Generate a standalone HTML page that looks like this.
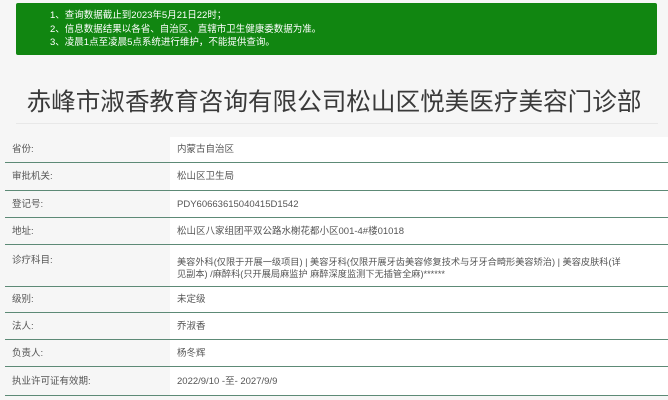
<!DOCTYPE html>
<html><head><meta charset="utf-8"><style>
*{margin:0;padding:0;box-sizing:border-box}
body{width:668px;height:400px;overflow:hidden;background:#f6f6f6;font-family:"Liberation Sans","Noto Sans CJK SC",sans-serif;position:relative}
.green{position:absolute;left:16px;top:3px;width:641px;height:52px;background:#118611;border-radius:2px;color:#fff;font-size:9.5px;line-height:13.5px;padding:6px 0 0 34px}
h1{position:absolute;left:0;top:83px;width:668px;text-align:center;font-weight:normal;font-size:24.6px;color:#3a3a3a;line-height:34px;white-space:nowrap;font-family:"Noto Sans CJK SC",sans-serif}
.hr{position:absolute;left:16px;top:123px;width:642px;height:1px;background:#e8e8e8}
.row{position:absolute;left:5px;width:663px;border-bottom:1.5px solid #5d8a76;font-size:9.5px;color:#555}
.row .l{position:absolute;left:7px}
.row .v{position:absolute;left:165px;top:0;bottom:0;right:0;background:#fff;padding-left:7px;white-space:nowrap;overflow:hidden}
</style></head><body>
<div class="green">1、查询数据截止到2023年5月21日22时；<br>2、信息数据结果以各省、自治区、直辖市卫生健康委数据为准。<br>3、凌晨1点至凌晨5点系统进行维护，不能提供查询。</div>
<h1>赤峰市淑香教育咨询有限公司松山区悦美医疗美容门诊部</h1>
<div class="hr"></div>
<div class="row" style="top:137px;height:26px;line-height:26px"><span class="l">省份:</span><div class="v">内蒙古自治区</div></div>
<div class="row" style="top:163px;height:28px;line-height:28px"><span class="l">审批机关:</span><div class="v">松山区卫生局</div></div>
<div class="row" style="top:191px;height:27px;line-height:27px"><span class="l">登记号:</span><div class="v">PDY60663615040415D1542</div></div>
<div class="row" style="top:218px;height:27px;line-height:27px"><span class="l">地址:</span><div class="v">松山区八家组团平双公路水榭花都小区001-4#楼01018</div></div>
<div class="row" style="top:245px;height:42px;line-height:12px"><span class="l" style="top:10px">诊疗科目:</span><div class="v" style="padding-top:11px;font-size:9.2px">美容外科(仅限于开展一级项目) | 美容牙科(仅限开展牙齿美容修复技术与牙牙合畸形美容矫治) | 美容皮肤科(详<br>见副本) /麻醉科(只开展局麻监护 麻醉深度监测下无插管全麻)******</div></div>
<div class="row" style="top:287px;height:26px;line-height:26px"><span class="l">级别:</span><div class="v">未定级</div></div>
<div class="row" style="top:313px;height:27px;line-height:27px"><span class="l">法人:</span><div class="v">乔淑香</div></div>
<div class="row" style="top:340px;height:27px;line-height:27px"><span class="l">负责人:</span><div class="v">杨冬辉</div></div>
<div class="row" style="top:367px;height:29px;line-height:29px"><span class="l">执业许可证有效期:</span><div class="v">2022/9/10 -至- 2027/9/9</div></div>
</body></html>
